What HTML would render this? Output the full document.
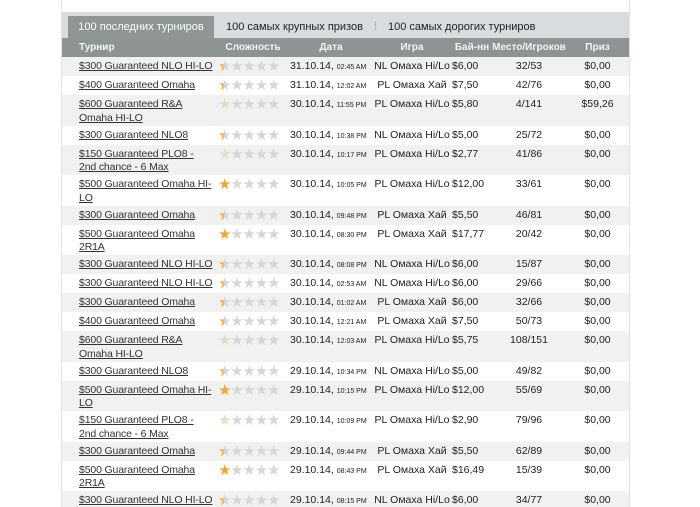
<!DOCTYPE html>
<html><head><meta charset="utf-8"><style>
body{margin:0;background:#fff;font-family:"Liberation Sans",sans-serif;overflow:hidden;height:507px}
.panel{position:absolute;left:61px;top:0;width:567px;height:507px;border-left:1px solid #e2e2e2;border-right:1px solid #e2e2e2;background:#fff;overflow:hidden}
.tabs{position:absolute;left:0;top:12px;width:567px;height:26px;background:#d8dcde;font-size:11px;color:#222;}
.tab{position:absolute;top:4px;height:22px;line-height:22px;white-space:nowrap}
.tab.a{left:6px;width:146px;background:#8e9696;color:#fff;text-align:center;}
table{position:absolute;left:0;top:38px;width:567px;border-collapse:collapse;font-size:10.5px;color:#222;table-layout:fixed}
th{background:#8e9494;color:#f4f4f4;font-weight:bold;height:19px;font-size:10px;padding:0;white-space:nowrap;overflow:visible}
td{padding:0;vertical-align:top;line-height:13.5px;white-space:nowrap;overflow:hidden;box-sizing:border-box}
td:first-child{letter-spacing:-0.15px}
tr.r td{padding-top:3px}
tr:nth-child(even) td{background:#f1f1f1}
tr.s td{height:19px}tr.d td{height:30.5px}
a{color:#333;text-decoration:underline}
.st{font-size:15px;color:#d6d6d6;letter-spacing:-1.2px;line-height:12px;padding-top:4px!important;padding-left:2px!important}
.g{color:#f0a830}.h{background:linear-gradient(90deg,#f0a830 45%,#d6d6d6 45%);-webkit-background-clip:text;background-clip:text;color:transparent}
.e{color:#e6dcc6}
.c{text-align:center}
small{font-size:7px}
</style></head><body>
<div class="panel">
<div class="tabs">
<div class="tab a">100 последних турниров</div>
<div class="tab" style="left:164px">100 самых крупных призов</div>
<div class="tab" style="left:312px;color:#999">⁞</div>
<div class="tab" style="left:326px">100 самых дорогих турниров</div>
</div>
<table>
<colgroup><col style="width:154px"><col style="width:74px"><col style="width:82px"><col style="width:80px"><col style="width:40px"><col style="width:74px"><col style="width:63px"></colgroup>
<tr><th style="text-align:left;padding-left:17px">Турнир</th><th>Сложность</th><th>Дата</th><th>Игра</th><th>Бай-нн</th><th>Место/Игроков</th><th>Приз</th></tr>
</table>
<table style="top:57px">
<colgroup><col style="width:154px"><col style="width:74px"><col style="width:82px"><col style="width:80px"><col style="width:40px"><col style="width:74px"><col style="width:63px"></colgroup>
<tbody>
<tr style="display:none"></tr>
<tr class="s r"><td style="padding-left:17px"><a>$300 Guaranteed NLO HI-LO</a></td><td class="st"><span class="h">★</span>★★★★</td><td>31.10.14, <small>02:45 AM</small></td><td class="c">NL Омаха Hi/Lo</td><td>$6,00</td><td class="c">32/53</td><td class="c">$0,00</td></tr>
<tr class="s r"><td style="padding-left:17px"><a>$400 Guaranteed Omaha</a></td><td class="st"><span class="h">★</span>★★★★</td><td>31.10.14, <small>12:02 AM</small></td><td class="c">PL Омаха Хай</td><td>$7,50</td><td class="c">42/76</td><td class="c">$0,00</td></tr>
<tr class="d r"><td style="padding-left:17px"><a>$600 Guaranteed R&amp;A<br>Omaha HI-LO</a></td><td class="st"><span class="e">★</span>★★★★</td><td>30.10.14, <small>11:55 PM</small></td><td class="c">PL Омаха Hi/Lo</td><td>$5,80</td><td class="c">4/141</td><td class="c">$59,26</td></tr>
<tr class="s r"><td style="padding-left:17px"><a>$300 Guaranteed NLO8</a></td><td class="st"><span class="h">★</span>★★★★</td><td>30.10.14, <small>10:38 PM</small></td><td class="c">NL Омаха Hi/Lo</td><td>$5,00</td><td class="c">25/72</td><td class="c">$0,00</td></tr>
<tr class="d r"><td style="padding-left:17px"><a>$150 Guaranteed PLO8 -<br>2nd chance - 6 Max</a></td><td class="st"><span class="e">★</span>★★★★</td><td>30.10.14, <small>10:17 PM</small></td><td class="c">PL Омаха Hi/Lo</td><td>$2,77</td><td class="c">41/86</td><td class="c">$0,00</td></tr>
<tr class="d r"><td style="padding-left:17px"><a>$500 Guaranteed Omaha HI-<br>LO</a></td><td class="st"><span class="g">★</span>★★★★</td><td>30.10.14, <small>10:05 PM</small></td><td class="c">PL Омаха Hi/Lo</td><td>$12,00</td><td class="c">33/61</td><td class="c">$0,00</td></tr>
<tr class="s r"><td style="padding-left:17px"><a>$300 Guaranteed Omaha</a></td><td class="st"><span class="h">★</span>★★★★</td><td>30.10.14, <small>09:48 PM</small></td><td class="c">PL Омаха Хай</td><td>$5,50</td><td class="c">46/81</td><td class="c">$0,00</td></tr>
<tr class="d r"><td style="padding-left:17px"><a>$500 Guaranteed Omaha<br>2R1A</a></td><td class="st"><span class="g">★</span>★★★★</td><td>30.10.14, <small>08:30 PM</small></td><td class="c">PL Омаха Хай</td><td>$17,77</td><td class="c">20/42</td><td class="c">$0,00</td></tr>
<tr class="s r"><td style="padding-left:17px"><a>$300 Guaranteed NLO HI-LO</a></td><td class="st"><span class="h">★</span>★★★★</td><td>30.10.14, <small>08:08 PM</small></td><td class="c">NL Омаха Hi/Lo</td><td>$6,00</td><td class="c">15/87</td><td class="c">$0,00</td></tr>
<tr class="s r"><td style="padding-left:17px"><a>$300 Guaranteed NLO HI-LO</a></td><td class="st"><span class="h">★</span>★★★★</td><td>30.10.14, <small>02:53 AM</small></td><td class="c">NL Омаха Hi/Lo</td><td>$6,00</td><td class="c">29/66</td><td class="c">$0,00</td></tr>
<tr class="s r"><td style="padding-left:17px"><a>$300 Guaranteed Omaha</a></td><td class="st"><span class="h">★</span>★★★★</td><td>30.10.14, <small>01:02 AM</small></td><td class="c">PL Омаха Хай</td><td>$6,00</td><td class="c">32/66</td><td class="c">$0,00</td></tr>
<tr class="s r"><td style="padding-left:17px"><a>$400 Guaranteed Omaha</a></td><td class="st"><span class="h">★</span>★★★★</td><td>30.10.14, <small>12:21 AM</small></td><td class="c">PL Омаха Хай</td><td>$7,50</td><td class="c">50/73</td><td class="c">$0,00</td></tr>
<tr class="d r"><td style="padding-left:17px"><a>$600 Guaranteed R&amp;A<br>Omaha HI-LO</a></td><td class="st"><span class="e">★</span>★★★★</td><td>30.10.14, <small>12:03 AM</small></td><td class="c">PL Омаха Hi/Lo</td><td>$5,75</td><td class="c">108/151</td><td class="c">$0,00</td></tr>
<tr class="s r"><td style="padding-left:17px"><a>$300 Guaranteed NLO8</a></td><td class="st"><span class="h">★</span>★★★★</td><td>29.10.14, <small>10:34 PM</small></td><td class="c">NL Омаха Hi/Lo</td><td>$5,00</td><td class="c">49/82</td><td class="c">$0,00</td></tr>
<tr class="d r"><td style="padding-left:17px"><a>$500 Guaranteed Omaha HI-<br>LO</a></td><td class="st"><span class="g">★</span>★★★★</td><td>29.10.14, <small>10:15 PM</small></td><td class="c">PL Омаха Hi/Lo</td><td>$12,00</td><td class="c">55/69</td><td class="c">$0,00</td></tr>
<tr class="d r"><td style="padding-left:17px"><a>$150 Guaranteed PLO8 -<br>2nd chance - 6 Max</a></td><td class="st"><span class="e">★</span>★★★★</td><td>29.10.14, <small>10:09 PM</small></td><td class="c">PL Омаха Hi/Lo</td><td>$2,90</td><td class="c">79/96</td><td class="c">$0,00</td></tr>
<tr class="s r"><td style="padding-left:17px"><a>$300 Guaranteed Omaha</a></td><td class="st"><span class="h">★</span>★★★★</td><td>29.10.14, <small>09:44 PM</small></td><td class="c">PL Омаха Хай</td><td>$5,50</td><td class="c">62/89</td><td class="c">$0,00</td></tr>
<tr class="d r"><td style="padding-left:17px"><a>$500 Guaranteed Omaha<br>2R1A</a></td><td class="st"><span class="g">★</span>★★★★</td><td>29.10.14, <small>08:43 PM</small></td><td class="c">PL Омаха Хай</td><td>$16,49</td><td class="c">15/39</td><td class="c">$0,00</td></tr>
<tr class="s r"><td style="padding-left:17px"><a>$300 Guaranteed NLO HI-LO</a></td><td class="st"><span class="h">★</span>★★★★</td><td>29.10.14, <small>08:15 PM</small></td><td class="c">NL Омаха Hi/Lo</td><td>$6,00</td><td class="c">34/77</td><td class="c">$0,00</td></tr>
</tbody></table>
</div>
</body></html>
